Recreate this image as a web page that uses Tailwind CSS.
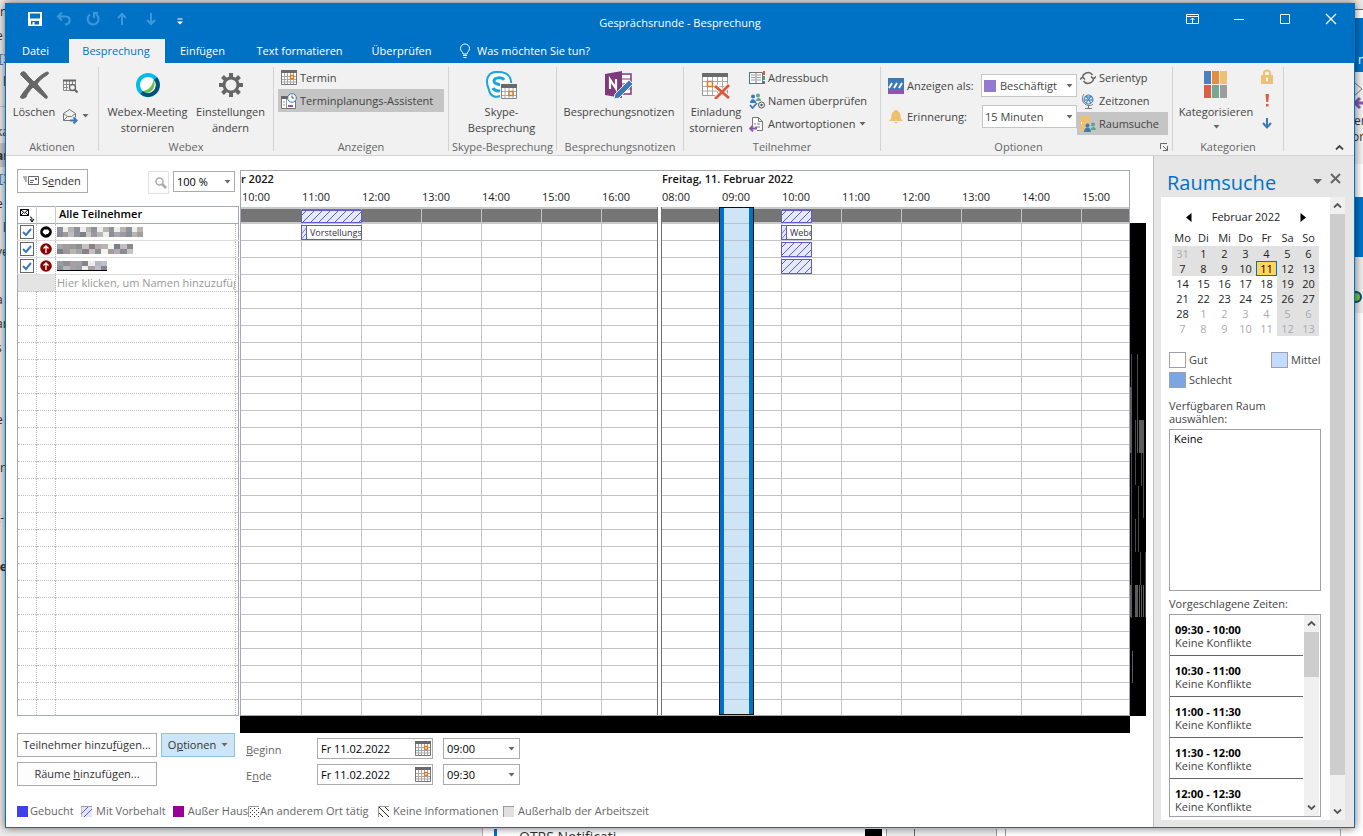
<!DOCTYPE html>
<html lang="de">
<head>
<meta charset="utf-8">
<title>Gesprächsrunde - Besprechung</title>
<script src="https://cdn.jsdelivr.net/npm/@tailwindcss/browser@4"></script>
</head>
<body class="font-['Open_Sans','Noto_Sans',sans-serif] text-[11px] leading-4 text-[#444] bg-[#ececec]">
<svg class="hidden">
  <symbol id="caret" viewBox="0 0 7 4"><path d="M.5 0h6L3.5 3.500z" fill="#666"/></symbol>
  <symbol id="cal" viewBox="0 0 16 15"><path d="M.5.5h15v14H.5z" fill="#fff" stroke="#767676"/><path d="M0 0h16v3H0z" fill="#6a6a6a"/><path d="M3.500 3v11M6.500 3v11M9.500 3v11M12.500 3v11M1 6.500h14M1 9.500h14M1 12h14" stroke="#a8a8a8" fill="none"/><path d="M9.500 5.500h3v3h-3z" fill="#fff" stroke="#e07a20" stroke-width="1.300"/></symbol>
  <symbol id="hatch" viewBox="0 0 60 13"><path d="M-9 13 4 0M-1 13 12 0M7 13 20 0M15 13 28 0M23 13 36 0M31 13 44 0M39 13 52 0M47 13 60 0M55 13 68 0" stroke="#5e5cd0" fill="none"/></symbol>
  <symbol id="up" viewBox="0 0 9 5"><path d="M1 4.500 4.500 1 8 4.500" fill="none" stroke="currentColor" stroke-width="1.800"/></symbol>
  <symbol id="down" viewBox="0 0 9 5"><path d="M1 .5 4.500 4 8 .5" fill="none" stroke="currentColor" stroke-width="1.800"/></symbol>
</svg>

<main class="relative min-h-screen overflow-hidden pt-[3px] pr-2 pb-[9px] pl-[5px]">
  <!-- windows lying behind the dialog -->
  <div class="absolute inset-0 text-[12px] text-[#333]" aria-hidden="true">
    <div class="absolute inset-y-0 left-[482px] right-0 border-l border-[#b5b5b5] bg-white"></div>
    <div class="absolute inset-x-0 top-0 h-[9px] bg-[#e9e9e9]"></div>
    <div class="absolute left-0 top-[106px] h-px w-2 bg-[#c5c5c5]"></div>
    <div class="absolute left-0 top-[143px] h-[24px] w-2 bg-[#cbcbcb]"></div>
    <span class="absolute left-0 top-[4px]">n</span>
    <span class="absolute -left-1 top-[28px]">e</span>
    <span class="absolute -left-px top-[51px] text-[#2a6fb5]">[3</span>
    <span class="absolute left-[3px] top-[74px]">l</span>
    <span class="absolute -left-1 top-[124px]">ka</span>
    <span class="absolute -left-1 top-[148px] font-bold">ar</span>
    <span class="absolute -left-px top-[171px] text-[#2a6fb5]">[3</span>
    <span class="absolute -left-1 top-[196px]">e</span>
    <span class="absolute left-[3px] top-[220px]">l</span>
    <span class="absolute -left-1 top-[244px]">ve</span>
    <span class="absolute -left-1 top-[292px]">a</span>
    <span class="absolute -left-1 top-[316px]">ar</span>
    <span class="absolute -left-1 top-[340px]">s</span>
    <span class="absolute -left-1 top-[412px]">e</span>
    <span class="absolute left-0 top-[460px]">r</span>
    <span class="absolute -left-1 top-[510px]">t-</span>
    <span class="absolute -left-1 top-[559px] font-bold">ie</span>
    <div class="absolute right-0 top-[9px] h-px w-2 bg-[#666]"></div>
    <div class="absolute right-0 top-[18px] h-[54px] w-2 bg-[#0072c6]"></div>
    <span class="absolute left-[1358px] top-[52px] text-white">n</span>
    <div class="absolute right-0 top-[72px] h-[92px] w-2 bg-[#f1f1f1]"></div>
    <svg class="absolute left-[1352px] top-[80px] h-8 w-3" viewBox="0 0 12 32" fill="none"><path d="m2 2 8 7-8 7" stroke="#777"/><path d="M12 23H3m5-5-5 5 5 5" stroke="#8a57b0" stroke-width="3"/></svg>
    <span class="absolute left-[1354px] top-[113px]">er</span>
    <span class="absolute left-[1352px] top-[129px]">ort</span>
    <div class="absolute right-0 top-[197px] h-[60px] w-2 bg-[#0072c6]"></div>
    <div class="absolute right-0 top-[257px] h-[56px] w-2 bg-[#ececec]"></div>
    <div class="absolute left-[1350px] top-[291px] size-3 rounded-full border-2 border-[#075170] bg-[#7ac143]"></div>
    <div class="absolute bottom-0 left-[494px] h-2 w-[3px] bg-[#0072c6]"></div>
    <span class="absolute left-[519px] top-[829px] text-[14px] leading-4">OTRS Notificati</span>
    <div class="absolute bottom-0 left-[865px] h-2 w-[17px] bg-black"></div>
    <div class="absolute bottom-0 left-[886px] h-2 w-[111px] border-x border-[#999] bg-[#ececec]"></div>
    <div class="absolute bottom-0 left-[914px] h-2 w-px bg-[#666]"></div>
    <div class="absolute bottom-0 left-[1005px] h-2 w-px bg-[#999]"></div>
    <div class="absolute bottom-0 left-[1340px] h-2 w-px bg-[#aaa]"></div>
  </div>

  <section class="relative flex min-h-[824px] flex-col border border-[#0072c6] bg-white shadow-[0_0_8px_rgba(0,0,0,0.6)]">
    <!-- title bar -->
    <header class="bg-[#0072c6] text-white">
      <div class="grid h-[35px] grid-cols-[1fr_auto_1fr] items-center">
        <div class="flex items-center gap-[13px] pl-[21px] pb-[6px] text-[#3f97da]">
          <button aria-label="Speichern" class="text-white"><svg class="size-4" viewBox="0 0 16 16"><path fill="currentColor" fill-rule="evenodd" d="M1 1h14v14H1zM3 2.500v5h10v-5zM4 10v3.500h1.500V11h2v2.500H12V10z"/></svg></button>
          <button aria-label="Rückgängig"><svg class="size-4" viewBox="0 0 16 16" fill="none" stroke="currentColor" stroke-width="2"><path d="M2 5.500h8c5 0 5 8-1 8M6 1.500l-4 4 4 4"/></svg></button>
          <button aria-label="Wiederholen"><svg class="size-4" viewBox="0 0 16 16" fill="none" stroke="currentColor" stroke-width="2"><path d="M5 3.500a5.500 5.500 0 1 0 6-.2M8 2h5M9 2v5"/></svg></button>
          <button aria-label="Vorheriges Element"><svg class="size-4" viewBox="0 0 16 16" fill="none" stroke="currentColor" stroke-width="2"><path d="M8 14V3M4 7l4-4 4 4"/></svg></button>
          <button aria-label="Nächstes Element"><svg class="size-4" viewBox="0 0 16 16" fill="none" stroke="currentColor" stroke-width="2"><path d="M8 2v11M4 9l4 4 4-4"/></svg></button>
          <button aria-label="Symbolleiste anpassen" class="text-white"><svg class="size-4" viewBox="0 0 16 16"><path d="M5.500 7.500h5v1h-5zM5 10.500h6l-3 3z" fill="currentColor"/></svg></button>
        </div>
        <h1 class="pt-[2px]">Gesprächsrunde - Besprechung</h1>
        <div class="flex items-center justify-end gap-[30px] pb-[5px] pr-[15px]">
          <button aria-label="Menüband-Anzeigeoptionen"><svg class="h-4 w-4" viewBox="0 0 16 16" fill="none" stroke="currentColor"><path d="M1.500 3.500h12v9h-12zM1.500 5.500h12M7.500 12V7M5.500 9l2-2 2 2"/></svg></button>
          <button aria-label="Minimieren"><svg class="size-4" viewBox="0 0 16 16"><path d="M3 8h10v1H3z" fill="currentColor"/></svg></button>
          <button aria-label="Maximieren"><svg class="size-4" viewBox="0 0 16 16" fill="none" stroke="currentColor"><path d="M3.500 3.500h9v9h-9z"/></svg></button>
          <button aria-label="Schließen"><svg class="size-4" viewBox="0 0 16 16" fill="none" stroke="currentColor" stroke-width="1.300"><path d="m3 3 10 10M13 3 3 13"/></svg></button>
        </div>
      </div>
      <nav class="flex h-6 items-stretch">
        <button class="w-[63px] pr-1">Datei</button>
        <button class="w-24 bg-[#f1f1f1] pr-[2px] text-[#0072c6]">Besprechung</button>
        <button class="w-[77px] pr-[2px]">Einfügen</button>
        <button class="w-[115px]">Text formatieren</button>
        <button class="w-[89px]">Überprüfen</button>
        <label class="flex items-center pl-[13px]"><svg class="mr-[6px] h-4 w-3" viewBox="0 0 12 16" fill="none" stroke="currentColor"><path d="M4 11c0-2-2.500-3-2.500-5.500a4.500 4.500 0 0 1 9 0C10.500 8 8 9 8 11zM4 12.500h4M4.500 14.500h3"/></svg><input class="w-40 bg-transparent outline-none placeholder:text-white placeholder:opacity-100" placeholder="Was möchten Sie tun?"></label>
      </nav>
    </header>

    <!-- ribbon -->
    <div class="flex h-[93px] items-stretch border-b border-[#d2d2d2] bg-[#f1f1f1]">
      <div class="flex w-[92px] flex-col pt-[3px]">
        <div class="flex">
          <button class="flex w-[56px] flex-col items-center pt-[5px]"><svg class="mb-[5px] h-7 w-8" viewBox="0 0 32 28"><path d="M3 2c3-3 5 0 7 3l6 6C20 7 24 3 29 1c2 0 2 2 0 3-5 3-8 6-10 9l10 12c1 3-1 3-3 1L15 16C11 20 9 23 8 26c-2 2-7 2-5-1 3-5 6-8 9-12L4 5C3 4 2 3 3 2z" fill="#666" stroke="#666"/></svg>Löschen</button>
          <div class="flex flex-col gap-[14px] pt-[12px]">
            <button aria-label="In Kalender kopieren"><svg class="size-4" viewBox="0 0 16 16" fill="none" stroke="#8a8a8a"><path d="M1.500 2.500h12v10h-12zM4.500 3v9M7.500 3v4M10.500 3v3M1 6.500h6M1 9.500h5"/><path d="M1 2.500h13" stroke="#666" stroke-width="2"/><circle cx="10.500" cy="9.500" r="3" fill="#f1f1f1" stroke="#666" stroke-width="1.300"/><path d="m12.500 11.500 3 3" stroke="#666" stroke-width="2"/></svg></button>
            <button aria-label="Weiterleiten" class="flex items-center gap-1"><svg class="size-4" viewBox="0 0 16 16" fill="none" stroke="#777"><path d="M8 12.500H1.500v-7l6-4 6 4v4M1.500 5.500l4 3h4l4-3M1.500 12.500l4-4"/><path d="M8 12.500h6M11.500 9.500l3 3-3 3" stroke="#3b78b8" stroke-width="2"/></svg><svg class="h-1 w-[7px]"><use href="#caret"/></svg></button>
          </div>
        </div>
        <div class="mt-auto text-center text-[#666]">Aktionen</div>
      </div>
      <div class="my-1 w-px bg-[#d2d2d2]"></div>

      <div class="flex w-[174px] flex-col pt-[3px]">
        <div class="flex">
          <button class="flex w-[97px] flex-col items-center pt-[5px]"><svg class="mb-[5px] size-7" viewBox="0 0 28 28"><circle cx="14" cy="14" r="8" fill="#fff"/><path d="M19.500 8c3 6 0 14-8.500 14 -2 0-3-.5-4-1.500C14 20 19 15 19.500 8z" fill="#6cc04a"/><circle cx="14" cy="14" r="10" fill="none" stroke="#00bceb" stroke-width="4"/><path d="M21.500 7.500C25 12 24.500 18 20.500 21.500c-4 3.500-9 3.500-13 0" fill="none" stroke="#07507a" stroke-width="4"/></svg>Webex-Meeting<br>stornieren</button>
          <button class="flex w-[69px] flex-col items-center pt-[5px]"><svg class="mb-[5px] size-7" viewBox="0 0 28 28" fill="none" stroke="#666"><circle cx="14" cy="14" r="7" stroke-width="3"/><path d="M14 2v4M14 22v4M2 14h4M22 14h4M5.500 5.500l3 3M19.500 19.500l3 3M5.500 22.500l3-3M19.500 8.500l3-3" stroke-width="4"/></svg>Einstellungen<br>ändern</button>
        </div>
        <div class="mt-auto text-center text-[#666]">Webex</div>
      </div>
      <div class="my-1 w-px bg-[#d2d2d2]"></div>

      <div class="flex w-[174px] flex-col pt-[3px]">
        <div class="flex flex-col items-start pl-1">
          <button class="flex h-[23px] items-center gap-[3px] pl-[3px] pr-2"><svg class="h-[15px] w-4"><use href="#cal"/></svg>Termin</button>
          <button class="flex h-[23px] w-[166px] items-center gap-[3px] whitespace-nowrap bg-[#c5c5c5] pl-[3px]"><svg class="size-4 shrink-0" viewBox="0 0 16 16"><path d="M.5 3.500h14v12H.5z" fill="#fff" stroke="#777"/><path d="M0 3h10v3H0z" fill="#666"/><path d="M5.500 6v9M2 9h2M2 12h2" stroke="#999"/><path d="M7 12h5v2H7z" fill="#8a57b0"/><circle cx="11" cy="5" r="4.300" fill="#fff" stroke="#3b78b8"/><path d="M11 2.500V5h2" stroke="#555" fill="none"/></svg>Terminplanungs-Assistent</button>
        </div>
        <div class="mt-auto text-center text-[#666]">Anzeigen</div>
      </div>
      <div class="my-1 w-px bg-[#d2d2d2]"></div>

      <div class="flex w-[107px] flex-col pt-[3px]">
        <button class="flex flex-col items-center pr-[2px] pt-[5px]"><svg class="mb-[5px] h-7 w-8" viewBox="0 0 32 28"><path d="M3 2C7-1 9 0 12 0c8 0 13 5 12 12 1 6-4 11-11 12C8 26 3 24 2 18-1 11 0 5 3 2z" fill="#fff" stroke="#1aa5de" stroke-width="2" transform="translate(1 1)"/><path d="M18 9c-2-3-10-3-10 1 0 5 10 2 10 6 0 5-9 5-11 1" fill="none" stroke="#1aa5de" stroke-width="3"/><path d="M14 12h18v16H14z" fill="#f1f1f1"/><path d="M15.500 13.500h15v14h-15z" fill="#fff" stroke="#888"/><path d="M15 13h16v4H15z" fill="#6a6a6a"/><path d="M19 17v10M23 17v10M27 17v10M16 20.500h14M16 24.500h14" stroke="#aaa"/><path d="M23 20.500h4v4h-4z" fill="#fff" stroke="#e07a20" stroke-width="1.500"/></svg>Skype-<br>Besprechung</button>
        <div class="mt-auto whitespace-nowrap text-center text-[#666]">Skype-Besprechung</div>
      </div>
      <div class="my-1 w-px bg-[#d2d2d2]"></div>

      <div class="flex w-[126px] flex-col pt-[3px]">
        <button class="flex flex-col items-center pr-[2px] pt-[5px]"><svg class="mb-[5px] h-7 w-7" viewBox="0 0 28 28"><path d="M15 3h11v20H15z" fill="#fff" stroke="#80397b" stroke-width="1.500"/><path d="M17 8h9M17 13h9M17 18h9" stroke="#80397b"/><path d="M0 3 17 0v27L0 24z" fill="#80397b"/><path d="M5 18V8.500l6 9V8" fill="none" stroke="#fff" stroke-width="2.200"/><path d="m24 9 4 4-14 14-5 1 1-5z" fill="#3b78b8" stroke="#f1f1f1"/></svg>Besprechungsnotizen</button>
        <div class="mt-auto text-center text-[#666]">Besprechungsnotizen</div>
      </div>
      <div class="my-1 w-px bg-[#d2d2d2]"></div>

      <div class="flex w-[196px] flex-col pt-[3px]">
        <div class="flex">
          <button class="flex w-[64px] flex-col items-center pt-[5px]"><svg class="mb-[5px] h-7 w-7" viewBox="0 0 28 28"><path d="M.5 2.500h25v22H.5z" fill="#fff" stroke="#999"/><path d="M0 2h26v4H0z" fill="#6a6a6a"/><path d="M5.500 6v18M10.500 6v18M15.500 6v18M20.500 6v18M1 10.500h24M1 15.500h24M1 20h24" stroke="#aaa"/><path d="M5.500 10.500h5v5h-5z" fill="#fff" stroke="#e07a20" stroke-width="1.500"/><path d="m13 15 14 12M27 14 13 28" stroke="#f1f1f1" stroke-width="5"/><path d="m13 15 14 12M27 14 13 28" stroke="#d95b3b" stroke-width="2.800"/></svg>Einladung<br>stornieren</button>
          <div class="flex flex-col pl-px">
            <button class="flex h-[23px] items-center gap-[3px]"><svg class="size-4" viewBox="0 0 16 16" fill="none"><path d="M.5 2.500h13v11H.5zM7 2v12" stroke="#777" fill="#fff"/><path d="M2 5h4M2 7.500h4M2 10h4M8 5h4M8 7.500h4M8 10h4" stroke="#999"/><path d="M15 1v4" stroke="#d95b3b" stroke-width="2"/><path d="M15 6v4" stroke="#4c9f7b" stroke-width="2"/><path d="M15 11v3" stroke="#3b78b8" stroke-width="2"/><path d="M0 13.500h14M.5 2v12" stroke="#3b78b8"/></svg>Adressbuch</button>
            <button class="flex h-[23px] items-center gap-[3px]"><svg class="size-4" viewBox="0 0 16 16"><circle cx="4" cy="3.500" r="2" fill="#3b78b8"/><path d="M1 10c0-5 6-5 6 0z" fill="#3b78b8"/><circle cx="9" cy="2.500" r="2" fill="#5fa58a"/><path d="M7 8c0-4 5-4 5 0z" fill="#5fa58a"/><path d="m1 12 2.500 3L8 10" fill="none" stroke="#3b78b8" stroke-width="1.800"/><circle cx="12.500" cy="12" r="3" fill="#f1f1f1" stroke="#555"/><circle cx="12.500" cy="12" r="1.200" fill="#555"/></svg>Namen überprüfen</button>
            <button class="flex h-[23px] items-center gap-[3px]"><svg class="size-4" viewBox="0 0 16 16" fill="none"><path d="M3.500 9V1.500h6l4 4v9H8M9.500 1.500v4h4" stroke="#777" fill="#fff"/><path d="M5 8h2M8 8h3M8 11h3" stroke="#777"/><path d="M1 12.500h6v-2M4 9.500l-3 3 3 3" stroke="#8a57b0" stroke-width="1.800"/></svg>Antwortoptionen<svg class="h-1 w-[7px]"><use href="#caret"/></svg></button>
          </div>
        </div>
        <div class="mt-auto text-center text-[#666]">Teilnehmer</div>
      </div>
      <div class="my-1 w-px bg-[#d2d2d2]"></div>

      <div class="flex w-[291px] flex-col pt-[3px]">
        <div class="flex">
          <div class="flex w-[196px] flex-col gap-2 pl-[7px] pt-2">
            <div class="flex h-[23px] items-center"><svg class="mr-[3px] size-4" viewBox="0 0 16 16"><path d="M0 0h16v11H0z" fill="#3b78b8"/><path d="M0 11h16v5H0z" fill="#8a57b0"/><path d="m1 10 3-5M6 10l3-5M11 10l3-5" stroke="#fff" stroke-width="2"/></svg><label for="showas" class="w-[74px] whitespace-nowrap">Anzeigen als:</label>
              <div class="relative grid w-24 items-center"><select id="showas" class="h-[23px] w-full appearance-none border border-[#c6c6c6] bg-white pl-[18px]"><option>Beschäftigt</option></select><span class="pointer-events-none absolute left-[3px] size-3 bg-[#9379cf]"></span><svg class="pointer-events-none absolute right-1 h-1 w-[7px]"><use href="#caret"/></svg></div></div>
            <div class="flex h-[23px] items-center"><svg class="mr-[3px] size-4" viewBox="0 0 16 16"><path d="M6.500 1h3v1c3 1 3 4 3.500 8l1.500 1v1h-13v-1L3 10c.5-4 .5-7 3.500-8z" fill="#eec071"/><path d="M6 13h4l-2 2z" fill="#eec071"/></svg><label for="remind" class="w-[75px]">Erinnerung:</label>
              <div class="relative grid w-[95px] items-center"><select id="remind" class="h-[23px] w-full appearance-none border border-[#c6c6c6] bg-white pl-[2px]"><option>15 Minuten</option></select><svg class="pointer-events-none absolute right-1 h-1 w-[7px]"><use href="#caret"/></svg></div></div>
          </div>
          <div class="flex w-[91px] flex-col">
            <button class="flex h-[23px] items-center gap-[3px] pl-[3px]"><svg class="size-4" viewBox="0 0 16 16" fill="none" stroke="#666" stroke-width="1.500"><path d="M2.500 8.500A5.500 5.500 0 0 1 12.500 5M13.500 7.500A5.500 5.500 0 0 1 3.500 11M0 9.500 2.500 7 5 9.500M11 6.500 13.500 9 16 6.500"/></svg>Serientyp</button>
            <button class="flex h-[23px] items-center gap-[3px] pl-[3px]"><svg class="size-4" viewBox="0 0 16 16" fill="none"><circle cx="8.500" cy="6.500" r="4.500" fill="#d6e6f5" stroke="#3b78b8"/><path d="M5 4h7M4 7h9M6 10l5-7M6 3l5 7" stroke="#3b78b8"/><path d="M4 1C1 5 2 12 9 12.500c2 0 3-.5 4-1.500M8.500 13v2M5 15.500h7" stroke="#777"/></svg>Zeitzonen</button>
            <button class="flex h-[23px] items-center gap-[3px] bg-[#c5c5c5] pl-[3px]"><svg class="size-4" viewBox="0 0 16 16"><path d="M0 0h10v7L6 8v7H0z" fill="#eec071"/><path d="M1 6h1v2H1z" fill="#fff"/><circle cx="7.500" cy="9.500" r="2" fill="#3b78b8"/><path d="M4 16c0-6 7-6 7 0z" fill="#3b78b8"/><circle cx="13" cy="8.500" r="2" fill="#5fa58a"/><path d="M10.500 14c0-4 5.500-4 5.500 0z" fill="#5fa58a"/></svg>Raumsuche</button>
          </div>
        </div>
        <div class="mt-auto flex items-center pr-1 text-[#666]"><span class="flex-1 pr-1 text-center">Optionen</span><button aria-label="Weitere Optionen"><svg class="size-2" viewBox="0 0 8 8" fill="none" stroke="#666"><path d="M.5 6V.5H7M3 3l4 4M7.500 3v4.500H3"/></svg></button></div>
      </div>
      <div class="my-1 w-px bg-[#d2d2d2]"></div>

      <div class="flex w-[110px] flex-col pt-[3px]">
        <div class="flex">
          <button class="flex w-[86px] flex-col items-center pt-[5px]"><svg class="mb-[5px] h-7 w-6" viewBox="0 0 24 28"><path d="M0 0h7v13H0z" fill="#4a80bb"/><path d="M8 0h7v13H8z" fill="#e88c40"/><path d="M16 0h7v13h-7z" fill="#eec071"/><path d="M0 14h7v13H0z" fill="#db6043"/><path d="M8 14h7v13H8z" fill="#74a892"/><path d="M16 14h7v13h-7z" fill="#9c9c9c"/></svg>Kategorisieren<svg class="mt-[5px] h-1 w-[7px]"><use href="#caret"/></svg></button>
          <div class="flex flex-col gap-[7px] pt-[3px]">
            <button aria-label="Privat"><svg class="block size-4" viewBox="0 0 16 16"><path d="M5 7V4.500c0-4 6-4 6 0V7" fill="none" stroke="#eec071" stroke-width="2"/><path d="M2 6h12v9H2z" fill="#eec071"/><path d="M7.500 9h1v3h-1z" stroke="#fff"/></svg></button>
            <button aria-label="Wichtigkeit: hoch"><svg class="block size-4" viewBox="0 0 16 16"><path d="M6.500 2h3.500l-.8 8H7.300zM7 12h2.500v2.500H7z" fill="#db5a3c"/></svg></button>
            <button aria-label="Wichtigkeit: niedrig"><svg class="block size-4" viewBox="0 0 16 16" fill="none" stroke="#3b78b8" stroke-width="2"><path d="M8 3v9M4 8l4 4.500L12 8"/></svg></button>
          </div>
        </div>
        <div class="mt-auto text-center text-[#666]">Kategorien</div>
      </div>
      <div class="my-1 w-px bg-[#d2d2d2]"></div>
      <button aria-label="Menüband reduzieren" class="ml-auto mr-[10px] self-end pb-[5px]"><svg class="h-[5px] w-[9px]"><use href="#up"/></svg></button>
    </div>

    <div class="flex flex-1 items-stretch">
      <!-- scheduling area -->
      <div class="flex min-w-0 flex-1 flex-col pl-[11px]">
        <div class="flex items-start">
          <div class="w-[223px] shrink-0">
            <div class="flex h-[50px] items-start pt-[13px]">
              <button class="flex h-6 w-[71px] items-center gap-[3px] border border-[#ababab] bg-[#fdfdfd] pl-[5px] text-[#333]"><svg class="h-3 w-4" viewBox="0 0 16 12" fill="none"><path d="M5.500 1.500h10v8h-10z" stroke="#666"/><path d="M7 5.500h4M7 7.500h3M0 2h4M1 4h3M2 6h2" stroke="#666"/><path d="M12 3h2v2h-2z" fill="#3b78b8"/></svg><span>S<u>e</u>nden</span></button>
              <button aria-label="Zoom" class="ml-[60px] mt-[2px] grid h-[23px] w-[21px] place-items-center border border-[#e1e1e1] bg-[#fdfdfd] pl-1"><svg class="size-3" viewBox="0 0 12 12" fill="none" stroke="#aaa"><circle cx="4.500" cy="4.500" r="3.500" stroke-width="1.500"/><path d="m7 7 4 4" stroke-width="2.500"/></svg></button>
              <div class="relative ml-1 mt-[2px] grid w-[62px] items-center"><select aria-label="Zoomfaktor" class="h-[21px] w-full appearance-none border border-[#ababab] bg-white pl-[3px] text-black"><option>100 %</option></select><svg class="pointer-events-none absolute right-1 h-1 w-[7px]"><use href="#caret"/></svg></div>
            </div>
            <table class="w-[222px] table-fixed border-collapse border border-[#a5a9b5] text-black">
              <colgroup><col class="w-[19px]"><col class="w-[19px]"><col><col class="w-[3px]"></colgroup>
              <thead><tr class="h-[17px] border-b border-[#a5a9b5]"><th class="border-r border-[#c9ccd4] p-0"><svg class="block h-[15px] w-[17px]" viewBox="0 0 17 15" fill="none" stroke="#000"><path d="M2.500 1.500h8v6h-8zM2.500 1.500l4 3.500 4-3.500M2.500 7.500l3-3M10.500 7.500l-3-3M12 9c2 0 2 1 2 4M12 11l2 3 2-3"/></svg></th><th class="border-r border-[#c9ccd4] p-0"></th><th class="p-0 pb-[2px] pl-[3px] text-left font-semibold leading-[14px]">Alle Teilnehmer</th><th class="p-0"></th></tr></thead>
              <tbody id="people"></tbody>
            </table>
          </div>

          <div class="min-w-0 flex-1">
            <div class="mt-[14px] flex items-stretch overflow-hidden border border-[#a5a9b5] text-[#222]">
              <div class="w-[416px] shrink-0 overflow-hidden">
                <div class="h-[18px] font-semibold text-[#111]">r 2022</div>
                <div class="flex h-[18px] pl-px" data-hours="10,11,12,13,14,15,16"></div>
                <div class="relative">
                  <div class="h-[17px] border-y-2 border-[#c9c9c9] bg-[#757575]"></div>
                  <div data-rows></div>
                  <div class="absolute inset-0 flex pl-px" data-cols="6"></div>
                  <svg class="absolute left-[60px] top-[3px] h-[13px] w-[61px] border border-[#5e5cc8] bg-[#e6e8fb]"><use href="#hatch" width="60" height="13"/></svg>
                  <div class="absolute left-[60px] top-[18px] flex h-[15px] w-[61px] overflow-hidden border border-[#5e5cc8] bg-white text-[9px] leading-[14px] text-[#333]"><svg class="h-[13px] w-[5px] shrink-0 border-r border-[#5e5cc8] bg-[#e6e8fb]" viewBox="0 0 5 13"><path d="M-1 9 6 0M-1 15 6 7" stroke="#5e5cd0"/></svg><span class="pl-[3px]">Vorstellungsg</span></div>
                </div>
              </div>
              <div class="mt-9 w-[5px] shrink-0 border-x border-[#707070] bg-white"></div>
              <div class="min-w-0 flex-1 overflow-hidden">
                <div class="h-[18px] font-semibold text-[#111]">Freitag, 11. Februar 2022</div>
                <div class="flex h-[18px]" data-hours="08,09,10,11,12,13,14,15"></div>
                <div class="relative">
                  <div class="h-[17px] border-y-2 border-[#c9c9c9] bg-[#757575]"></div>
                  <div data-rows></div>
                  <div class="absolute inset-0 flex" data-cols="7"></div>
                  <div class="absolute inset-y-0 left-[57px] w-[35px] border border-[#111] bg-[#0072c6] px-1"><div class="h-full bg-[#cde5f7] bg-[repeating-linear-gradient(to_bottom,transparent_0_15px,#b9c3cc_15px_16px,transparent_16px_17px)]"></div></div>
                  <svg class="absolute left-[119px] top-[3px] h-[13px] w-[31px] border border-[#5e5cc8] bg-[#e6e8fb]"><use href="#hatch" width="60" height="13"/></svg>
                  <div class="absolute left-[119px] top-[18px] flex h-[15px] w-[31px] overflow-hidden border border-[#5e5cc8] bg-white text-[9px] leading-[14px] text-[#333]"><svg class="h-[13px] w-[5px] shrink-0 border-r border-[#5e5cc8] bg-[#e6e8fb]" viewBox="0 0 5 13"><path d="M-1 9 6 0M-1 15 6 7" stroke="#5e5cd0"/></svg><span class="pl-[3px]">Webex</span></div>
                  <svg class="absolute left-[119px] top-[35px] h-[15px] w-[31px] border border-[#5e5cc8] bg-[#e6e8fb]"><use href="#hatch" width="60" height="13"/></svg>
                  <svg class="absolute left-[119px] top-[52px] h-[15px] w-[31px] border border-[#5e5cc8] bg-[#e6e8fb]"><use href="#hatch" width="60" height="13"/></svg>
                </div>
              </div>
            </div>
            <div class="h-[17px] bg-black"></div>
          </div>
          <div class="mr-[7px] mt-[67px] h-[493px] w-4 shrink-0 bg-black pt-[131px]">
            <svg class="h-[330px] w-4" viewBox="0 0 16 330" fill="none"><path d="M1.500 0v33M7.500 0v98M1.500 66v198M5.500 66v65M11.500 66v66M13.500 99v65M8.500 132v66M5.500 165v33M10.500 198v33M15.500 198v65" stroke="#4a4a4a"/><path d="M0 33h2v66H0zM9 66h5v33H9zM0 231h2v32H0zM7 66h1v33H7zM5 231h3v32H5zM9 231h1v32H9zM11 231h1v32h-1zM13 231h1v32h-1zM2 297h1v32H2z" fill="#5c5c5c"/></svg>
          </div>
        </div>

        <div class="flex">
          <div class="flex w-[229px] shrink-0 flex-wrap content-start gap-x-1 gap-y-[5px] text-[#333]">
            <button class="h-6 w-[140px] border border-[#ababab] bg-[#fdfdfd]">Teilnehmer hinzu<u>f</u>ügen...</button>
            <button class="flex h-6 w-[74px] items-center justify-center gap-[5px] border border-[#92c0e0] bg-[#cde6f7]"><span>O<u>p</u>tionen</span><svg class="h-1 w-[7px]"><use href="#caret"/></svg></button>
            <button class="h-6 w-[140px] border border-[#ababab] bg-[#fdfdfd]">Räume <u>h</u>inzufügen...</button>
          </div>
          <div class="grid auto-rows-[21px] grid-cols-[71px_126px_77px] content-start items-center gap-y-[5px] pt-[5px]">
            <label for="bd" class="pt-[3px] text-[#666]"><u>B</u>eginn</label>
            <div class="flex h-[21px] w-[116px] items-center border border-[#ababab] bg-white pr-px"><input id="bd" value="Fr 11.02.2022" class="min-w-0 flex-1 pl-[3px] text-black outline-none"><svg class="h-[15px] w-4"><use href="#cal"/></svg></div>
            <div class="relative grid items-center"><select aria-label="Beginn Uhrzeit" class="h-[21px] w-full appearance-none border border-[#ababab] bg-white pl-[3px] text-black"><option>09:00</option></select><svg class="pointer-events-none absolute right-[5px] h-1 w-[7px]"><use href="#caret"/></svg></div>
            <label for="ed" class="pt-[3px] text-[#666]">E<u>n</u>de</label>
            <div class="flex h-[21px] w-[116px] items-center border border-[#ababab] bg-white pr-px"><input id="ed" value="Fr 11.02.2022" class="min-w-0 flex-1 pl-[3px] text-black outline-none"><svg class="h-[15px] w-4"><use href="#cal"/></svg></div>
            <div class="relative grid items-center"><select aria-label="Ende Uhrzeit" class="h-[21px] w-full appearance-none border border-[#ababab] bg-white pl-[3px] text-black"><option>09:30</option></select><svg class="pointer-events-none absolute right-[5px] h-1 w-[7px]"><use href="#caret"/></svg></div>
          </div>
        </div>

        <ul class="mb-2 mt-auto flex whitespace-nowrap text-[#666]">
          <li class="flex w-16 items-center gap-[2px]"><span class="size-[11px] bg-[#4040ea]"></span>Gebucht</li>
          <li class="flex w-[92px] items-center gap-1"><svg class="size-[11px] bg-[#e3e6fa]" viewBox="0 0 11 11" fill="none"><path d="m0 8 8-8M3 11l8-8" stroke="#5e5cd0"/><path d="M0 11V.5h11" stroke="#999"/></svg>Mit Vorbehalt</li>
          <li class="flex w-[75px] items-center gap-1"><span class="size-[11px] bg-[#970097]"></span>Außer Haus</li>
          <li class="flex w-[130px] items-center gap-px"><svg class="size-[11px]" viewBox="0 0 11 11" fill="none"><path d="M2 2.500h9M2 6.500h9M2 10.500h9" stroke="#333" stroke-dasharray="1 3"/><path d="M0 4.500h11M0 8.500h11" stroke="#333" stroke-dasharray="1 3"/><path d="M.5 11V.5H11" stroke="#999"/></svg>An anderem Ort tätig</li>
          <li class="flex w-[125px] items-center gap-1"><svg class="size-[11px]" viewBox="0 0 11 11" fill="none"><path d="m1 1 10 10M6 0l5 5M0 6l5 5" stroke="#222"/><path d="M.5 11V.5H11" stroke="#999"/></svg>Keine Informationen</li>
          <li class="flex items-center gap-1"><span class="size-[11px] border-l border-t border-[#999] bg-[#e0e0e0]"></span>Außerhalb der Arbeitszeit</li>
        </ul>
      </div>

      <!-- room finder -->
      <aside class="flex w-[201px] shrink-0 flex-col border-l border-[#c0c0c0] bg-[#e6e6e6] pb-[7px] pl-[7px] pr-[9px]">
        <div class="flex h-[41px] items-center pl-[6px] pr-1 pt-3">
          <h2 class="flex-1 text-[20px] leading-6 text-[#0072c6]">Raumsuche</h2>
          <button aria-label="Bereichsoptionen" class="mr-2"><svg class="mb-[3px] h-[5px] w-[9px]" viewBox="0 0 9 5"><path d="M0 0h9L4.500 5z" fill="#666"/></svg></button>
          <button aria-label="Schließen"><svg class="mb-2 size-[11px]" viewBox="0 0 11 11"><path d="m1 1 9 9M10 1l-9 9" stroke="#666" stroke-width="2"/></svg></button>
        </div>
        <div class="flex flex-1 bg-white">
          <div class="flex flex-1 flex-col pb-[3px] pl-2 pr-[9px]">
            <div class="flex items-center justify-between pl-[17px] pr-[15px] pt-3 text-[#222]">
              <button aria-label="Vorheriger Monat"><svg class="h-[9px] w-[6px]" viewBox="0 0 6 9"><path d="M5.500 0v9L0 4.500z"/></svg></button><span>Februar 2022</span><button aria-label="Nächster Monat"><svg class="h-[9px] w-[6px]" viewBox="0 0 6 9"><path d="M.5 0v9L6 4.500z"/></svg></button>
            </div>
            <table class="ml-[3px] mt-[5px] w-[147px] table-fixed border-collapse text-center text-[#222]">
              <thead><tr class="h-4"><th class="p-0 font-normal">Mo</th><th class="p-0 font-normal">Di</th><th class="p-0 font-normal">Mi</th><th class="p-0 font-normal">Do</th><th class="p-0 font-normal">Fr</th><th class="p-0 font-normal">Sa</th><th class="p-0 font-normal">So</th></tr></thead>
              <tbody id="month" class="leading-[15px]"></tbody>
            </table>
            <div class="mt-4 grid grid-cols-[102px_auto] gap-y-1">
              <span class="flex items-center gap-[3px]"><i class="h-4 w-[17px] border border-[#a0a0a8] bg-white"></i>Gut</span>
              <span class="flex items-center gap-[3px]"><i class="h-4 w-[17px] shrink-0 border border-[#a0a0a8] bg-[#c3dbff]"></i>Mittel</span>
              <span class="flex items-center gap-[3px]"><i class="h-4 w-[17px] border border-[#a0a0a8] bg-[#7aa6e4]"></i>Schlecht</span>
            </div>
            <div class="mt-[11px] leading-[13px]">Verfügbaren Raum<br>auswählen:</div>
            <div class="mt-[4px] h-[162px] border border-[#a0a0a8] px-1 pt-px text-black" role="listbox" aria-label="Verfügbaren Raum auswählen"><div role="option">Keine</div></div>
            <div class="mt-[5px] pb-[2px]">Vorgeschlagene Zeiten:</div>
            <div class="flex h-[203px] border border-[#a0a0a8]">
              <ul class="flex-1 divide-y divide-[#666] overflow-hidden leading-[13px]">
                <li class="h-[41px] px-[5px] pt-2"><b class="block text-black">09:30 - 10:00</b>Keine Konflikte</li>
                <li class="h-[41px] px-[5px] pt-2"><b class="block text-black">10:30 - 11:00</b>Keine Konflikte</li>
                <li class="h-[41px] px-[5px] pt-2"><b class="block text-black">11:00 - 11:30</b>Keine Konflikte</li>
                <li class="h-[41px] px-[5px] pt-2"><b class="block text-black">11:30 - 12:00</b>Keine Konflikte</li>
                <li class="h-[41px] px-[5px] pt-2"><b class="block text-black">12:00 - 12:30</b>Keine Konflikte</li>
              </ul>
              <div class="ml-px mr-px flex w-[15px] flex-col items-center bg-[#f0f0f0] text-[#555]"><svg class="my-[6px] h-[5px] w-[9px]"><use href="#up"/></svg><div class="h-[45px] w-full bg-[#cdcdcd]"></div><svg class="mb-[6px] mt-auto h-[5px] w-[9px]"><use href="#down"/></svg></div>
            </div>
          </div>
          <div class="flex w-[15px] flex-col items-center bg-[#f0f0f0] text-[#555]"><svg class="my-[6px] h-[5px] w-[9px]"><use href="#up"/></svg><div class="w-full flex-1 bg-[#cdcdcd]"></div><svg class="mb-[6px] mt-[34px] h-[5px] w-[9px]"><use href="#down"/></svg></div>
        </div>
      </aside>
    </div>
  </section>
</main>

<script>
const ROWS = 29;
// pixelated attendee names: rows of grey blocks, one underline at the end
const names = [
  {icon: 'o', w: 86, line: '', shades: ['#8b8b93','#a39a98','#bdbdc4','#8f939b','#7f7f86','#c9c6c4','#9d97a3','#b5b8b4','#eeeeee','#8d8d93','#aaa5b5','#9c9c9c','#8a8f95','#b9b4b0','#a0a0a0']},
  {icon: 'u', w: 76, line: '', shades: ['#7d7f86','#98989d','#b9b5ad','#a2a7ad','#8c8085','#c2bdc4','#909090','#f3f3f3','#a29b96','#b4aab4','#8a8a92','#c3c3c3']},
  {icon: 'u', w: 50, line: 'border-b border-black ', shades: ['#8f8f98','#b5b9bd','#a1a1a8','#969ca0','#ededed','#a89ea3','#bdbfd0','#84848a']}
];
const org = '<svg class="mx-auto block size-3" viewBox="0 0 12 12"><circle cx="6" cy="6" r="5.800" fill="#000"/><path d="M4 3.500h4l1.500 2L8 8H6.500l-2 1.500L5 8H4L2.500 6z" fill="#fff"/></svg>';
const req = '<svg class="mx-auto block size-3" viewBox="0 0 12 12"><circle cx="6" cy="6" r="5.800" fill="#8b0000"/><path d="M6 10V3M3.500 5.500 6 3l2.500 2.500" fill="none" stroke="#fff" stroke-width="1.300"/></svg>';
const edge = '<td class="border-l border-dotted border-[#bbb] p-0"></td></tr>';
let h = '';
for (let i = 0; i < ROWS; i++) {
  if (i < 3) {
    const n = names[i];
    h += '<tr class="h-[17px] border-b border-[#dcdcdc]"><td class="border-r border-dotted border-[#bbb] p-0"><label class="grid place-items-center"><input type="checkbox" checked aria-label="Teilnehmer ' + (i + 1) + '" class="col-start-1 row-start-1 size-[14px] appearance-none border border-[#666] bg-white"><svg class="pointer-events-none col-start-1 row-start-1 size-[10px]" viewBox="0 0 10 10"><path d="m1 5 3 3 5-6" fill="none" stroke="#3b78b8" stroke-width="2"/></svg></label></td><td class="border-r border-dotted border-[#bbb] p-0">' + (n.icon === 'o' ? org : req) + '</td><td class="p-0"><div class="' + n.line + 'ml-px flex h-[10px]" style="width:' + n.w + 'px">' + n.shades.map((c, j) => '<i class="flex flex-1 flex-col" style="background:' + c + '"><i class="h-[5px]" style="background:' + n.shades[(j * 5 + 3) % n.shades.length] + '"></i></i>').join('') + '</div></td>' + edge;
  } else if (i === 3) {
    h += '<tr class="h-[17px] border-b border-dotted border-[#c4c4c4]"><td class="bg-[#e4e4e4] p-0"></td><td class="border-r border-dotted border-[#bbb] bg-[#e4e4e4] p-0"></td><td class="overflow-hidden whitespace-nowrap p-0 pl-px text-[#999]">Hier klicken, um Namen hinzuzufügen</td>' + edge;
  } else {
    h += '<tr class="' + (i === ROWS - 1 ? 'h-4' : 'h-[17px]') + ' border-b border-dotted border-[#c4c4c4]"><td class="border-r border-dotted border-[#bbb] p-0"></td><td class="border-r border-dotted border-[#bbb] p-0"></td><td class="p-0"></td>' + edge;
  }
}
document.getElementById('people').innerHTML = h;
document.querySelectorAll('[data-hours]').forEach(e => e.innerHTML = e.dataset.hours.split(',').map(x => '<span class="w-[60px] shrink-0">' + x + ':00</span>').join(''));
document.querySelectorAll('[data-rows]').forEach(e => e.innerHTML = '<div class="h-[17px] border-b border-[#c4c4c4]"></div>'.repeat(ROWS - 1) + '<div class="h-[15px]"></div>');
document.querySelectorAll('[data-cols]').forEach(e => e.innerHTML = '<div class="w-[60px] shrink-0 border-r border-[#c4c4c4]"></div>'.repeat(+e.dataset.cols));
let m = '';
for (let r = 0; r < 6; r++) {
  m += '<tr class="h-[15px]">';
  for (let c = 0; c < 7; c++) {
    const k = r * 7 + c, d = k === 0 ? 31 : k > 28 ? (k - 29) % 28 + 1 : k;
    const mute = k === 0 || k > 28, grey = r < 2 || c > 4;
    m += '<td class="p-0 ' + (k === 11 ? 'bg-[#ffd45c] outline outline-1 -outline-offset-1 outline-[#0072c6] text-black' : (grey ? 'bg-[#e1e1e1] ' : '') + (mute ? 'text-[#a8abb3]' : '')) + '">' + d + '</td>';
  }
  m += '</tr>';
}
document.getElementById('month').innerHTML = m;
</script>
</body>
</html>
